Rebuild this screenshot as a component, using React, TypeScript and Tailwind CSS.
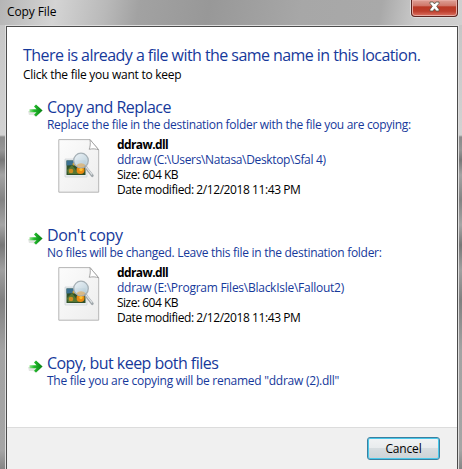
import { useId } from 'react'

type choiceType = {
    title: string
    text: string
    titleSpacing: string
    textSpacing: string
    path?: string
    pathSpacing?: string
}

const choices: choiceType[] = [
    {
        title: 'Copy and Replace',
        text: 'Replace the file in the destination folder with the file you are copying:',
        titleSpacing: 'tracking-[-0.54px]',
        textSpacing: 'tracking-[-0.3px]',
        path: 'ddraw (C:\\Users\\Natasa\\Desktop\\Sfal 4)',
        pathSpacing: 'tracking-[-0.34px]',
    },
    {
        title: "Don't copy",
        text: 'No files will be changed. Leave this file in the destination folder:',
        titleSpacing: 'tracking-[-0.4px]',
        textSpacing: 'tracking-[-0.29px]',
        path: 'ddraw (E:\\Program Files\\BlackIsle\\Fallout2)',
        pathSpacing: 'tracking-[-0.26px]',
    },
    {
        title: 'Copy, but keep both files',
        text: 'The file you are copying will be renamed "ddraw (2).dll"',
        titleSpacing: 'tracking-[-0.54px]',
        textSpacing: 'tracking-[-0.26px]',
    },
]

function ArrowIcon() {
    const id = useId()
    return (
        <svg className="mt-[6px] h-4 w-[18px] shrink-0" viewBox="0 0 18 16">
            <defs>
                <linearGradient id={id} x1="0" x2="1" y1="0" y2="0">
                    <stop offset="0" stopColor="#8fe58a" />
                    <stop offset=".35" stopColor="#22bd2b" />
                    <stop offset="1" stopColor="#087d14" />
                </linearGradient>
            </defs>
            <path d="M1 8h7l3-2 3 3-5 5-3-2H2z" fill="#dcdfdc" opacity=".8" />
            <path d="M2.500 6.200h7L7 3.400 9 1.600l6.600 6-6.600 6-2-1.800 2.500-2.500h-7z" fill={`url(#${id})`} />
        </svg>
    )
}

function FileIcon() {
    const id = useId()
    return (
        <svg className="mt-px h-[54px] w-[42px] shrink-0" viewBox="0 0 42 54">
            <defs>
                <linearGradient id={id + 'p'} x1="0" x2="1" y1="0" y2="1">
                    <stop offset="0" stopColor="#fcfcfc" />
                    <stop offset="1" stopColor="#ededed" />
                </linearGradient>
                <linearGradient id={id + 'l'} x1="0" x2="1" y1="0" y2="1">
                    <stop offset="0" stopColor="#edf3f7" />
                    <stop offset="1" stopColor="#b5ccd8" />
                </linearGradient>
            </defs>
            <path d="M.8.6H32l8.700 10.200v42.400H.8z" fill={`url(#${id + 'p'})`} stroke="#b5b5b5" />
            <path d="M32 .6c.6 4 .2 7-.8 9.700 3.500-.8 6.500-.5 9.500.5z" fill="#fff" stroke="#a5a5a5" />
            <path d="M7 20h22v18H7z" fill="#e7edef" stroke="#c9cfd1" strokeWidth=".6" />
            <path d="M8.500 21.500h19v14.500h-19z" fill="#30502a" />
            <path d="M8.500 21.500h19v4l-19 1z" fill="#3b7090" />
            <path d="m9 31 5-5 3 4 4 5H10z" fill="#577731" />
            <circle cx="13" cy="32" r="2.300" fill="#cf8d21" />
            <circle cx="16" cy="25" r="1.500" fill="#d5a22b" />
            <circle cx="22.500" cy="31" r="4" fill="#e98a12" />
            <circle cx="23" cy="30.500" r="1.700" fill="#ffc229" />
            <circle cx="23" cy="21.500" r="7.300" fill={`url(#${id + 'l'})`} fillOpacity=".95" stroke="#a6b0b6" strokeWidth="1.300" />
            <path d="M18.500 26.500c2-3 7-3 9 0-3 2.500-6 2.500-9 0z" fill="#e7a850" opacity=".6" />
            <path d="m27.500 28 6.800 8.700" stroke="#a0a7ab" strokeWidth="2.800" strokeLinecap="round" />
            <path d="m28 28 6 7.700" stroke="#e2e6e8" strokeWidth="1.100" />
        </svg>
    )
}

function Choice({ title, text, titleSpacing, textSpacing, path, pathSpacing }: choiceType) {
    return (
        <li className="flex h-32">
            <ArrowIcon />
            <div className="ml-[2px]">
                <h2 className={`text-base leading-5 text-[#16399b] ${titleSpacing}`}>{title}</h2>
                <p className={`h-4 leading-4 text-[#16399b] ${textSpacing}`}>{text}</p>
                {path && (
                    <div className="ml-[11px] mt-[5px] flex gap-[17px]">
                        <FileIcon />
                        <div className="-mt-px flex flex-col leading-[15px]">
                            <p className="font-bold tracking-[-0.6px]">ddraw.dll</p>
                            <p className={`text-[#16399b] ${pathSpacing}`}>{path}</p>
                            <p className="tracking-[-0.5px]">Size: 604 KB</p>
                            <p className="tracking-[-0.42px]">Date modified: 2/12/2018 11:43 PM</p>
                        </div>
                    </div>
                )}
            </div>
        </li>
    )
}

export default function App() {
    return (
        <div className="flex h-[469px] w-[462px] flex-col overflow-hidden whitespace-nowrap bg-[linear-gradient(180deg,#c4c4c4_0,#d2d2d2_135px,#8a8a8a_137px,#969696_150px,#777_160px,#a3a3a3_175px,#838383_200px,#a5a5a5_225px,#777_245px,#a0a0a0_270px,#808080_300px,#a3a3a3_350px,#a5a5a5_450px,#858585_469px)] font-['Open_Sans',sans-serif] text-[12px] text-black">
            <header className="flex h-[25px] shrink-0 justify-between bg-[linear-gradient(100deg,#b5b5b5_0,#d4d4d4_12%,#b9b9b9_23%,#a2a2a2_30%,#989898_45%,#a7a7a7_65%,#a9a9a9_82%,#cacaca_90%,#d0d0d0_100%)] pl-[7px] pr-[4px]">
                <h1 className="leading-6 tracking-[-0.1px]">Copy File</h1>
                <button aria-label="Close" className="flex h-[17px] w-[47px] items-center justify-center rounded-b-[4px] border border-t-0 border-[#5c2420] bg-[linear-gradient(180deg,#dda096_0,#cf7467_38%,#b93825_42%,#bd3d2c_70%,#dc7464_100%)] pb-[3px] shadow-[inset_0_0_0_1px_#e6aaa2,0_0_0_1px_#dcdcdc]">
                    <svg className="h-[11px] w-[13px]" viewBox="0 0 13 11">
                        <path d="M2 1h3l1.500 2L8 1h3v1.500L8.700 5.300 11 8.500V10H8L6.500 7.800 5 10H2V8.500l2.300-3.200L2 2.500z" fill="#fff" stroke="#554" strokeWidth=".8" />
                    </svg>
                </button>
            </header>
            <div className="ml-[5px] mr-[3px] flex grow flex-col border border-b-0 border-[#dedede]">
                <main className="flex grow flex-col border border-b-0 border-l-[#4c4c4c] border-r-[#4c4c4c] border-t-[#4c4c4c] bg-white">
                    <div className="h-[401px] border-b border-[#dcdcdc]">
                        <div className="pl-4 pt-[17px]">
                            <p className="text-base leading-[22px] tracking-[-0.56px] text-[#16399b]">There is already a file with the same name in this location.</p>
                            <p className="leading-[18px] tracking-[-0.26px]">Click the file you want to keep</p>
                        </div>
                        <ul className="ml-5 mt-[13px]">
                            {choices.map((choice) => (
                                <Choice key={choice.title} {...choice} />
                            ))}
                        </ul>
                    </div>
                    <footer className="flex grow justify-end bg-[#f0f0f0] pr-[17px] pt-[9px]">
                        <button className="h-[23px] w-[73px] rounded-[3px] border border-[#3c7f9f] bg-[linear-gradient(180deg,#f1f3f4_0,#e8ebed_48%,#d7dde0_50%,#ccd3d7_100%)] leading-5 tracking-[-0.15px] shadow-[inset_0_0_0_1px_#48c8ea]">Cancel</button>
                    </footer>
                </main>
            </div>
        </div>
    )
}
